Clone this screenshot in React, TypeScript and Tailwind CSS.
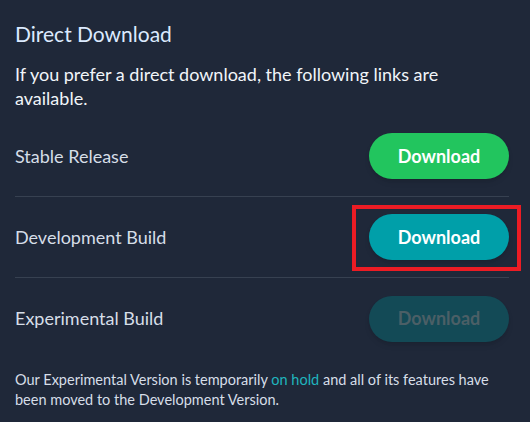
import React from "react";

function Row({ label, children, divider = true }: { label: string; children: React.ReactNode; divider?: boolean }) {
  return (
    <div className={`flex items-center justify-between h-[81px] ${divider ? "border-b border-[#374151]" : ""}`}>
      <span className="text-[18px] text-[#d6dee8]">{label}</span>
      {children}
    </div>
  );
}

export default function App() {
  return (
    <div
      className="w-[530px] h-[422px] bg-[#1f2839] pl-[15px] pr-[21px] pt-[20px] overflow-hidden"
      style={{ fontFamily: "Lato, 'Noto Sans', sans-serif" }}
    >
      <h2 className="text-[21px] leading-[28px] text-[#dbeafe]">Direct Download</h2>
      <p className="mt-[14px] max-w-[440px] text-[18px] leading-[24px] text-[#f1f5f9]">
        If you prefer a direct download, the following links are available.
      </p>
      <div className="mt-[6px]">
        <Row label="Stable Release">
          <button className="w-[140px] h-[46px] rounded-full bg-[#22c55e] text-white font-bold text-[18px] shadow-md">
            Download
          </button>
        </Row>
        <Row label="Development Build">
          <div className="relative">
            <button className="w-[140px] h-[46px] rounded-full bg-[#009fa9] text-white font-bold text-[18px] shadow-md">
              Download
            </button>
            <div className="absolute left-[-17px] right-[-12px] top-[-9px] bottom-[-11px] border-4 border-[#ec1c24] pointer-events-none" />
          </div>
        </Row>
        <Row label="Experimental Build" divider={false}>
          <button className="w-[140px] h-[46px] rounded-full bg-[#134a56] text-[#4b5f66] font-bold text-[18px] shadow-md">
            Download
          </button>
        </Row>
      </div>
      <p className="mt-[11px] max-w-[480px] text-[14.5px] leading-[20px] text-[#d6dee8]">
        Our Experimental Version is temporarily <span className="text-[#1fb5be]">on hold</span> and all of its features have been moved to the Development Version.
      </p>
    </div>
  );
}
